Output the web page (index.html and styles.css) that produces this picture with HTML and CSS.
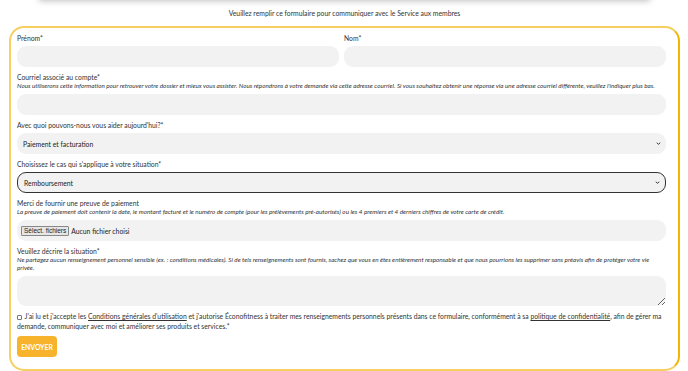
FILE: index.html
```html
<!DOCTYPE html>
<html>
<head>
    <link rel="stylesheet" href="styles.css">
    <title>Service aux membres</title>
</head>
<body>
    <div class="topShadow"></div>
    <p class="intro">Veuillez remplir ce formulaire pour communiquer avec le Service aux membres</p>
    <form class="card">
        <div class="row">
            <div class="field">
                <label>Prénom*</label>
                <input type="text" class="box">
            </div>
            <div class="field">
                <label>Nom*</label>
                <input type="text" class="box">
            </div>
        </div>
        <div class="field">
            <label>Courriel associé au compte*</label>
            <p class="hint">Nous utiliserons cette information pour retrouver votre dossier et mieux vous assister. Nous répondrons à votre demande via cette adresse courriel. Si vous souhaitez obtenir une réponse via une adresse courriel différente, veuillez l'indiquer plus bas.</p>
            <input type="email" class="box">
        </div>
        <div class="field">
            <label>Avec quoi pouvons-nous vous aider aujourd'hui?*</label>
            <div class="box select">
                <span>Paiement et facturation</span>
                <svg class="chev" viewBox="0 0 10 6"><path d="M1.5 1.5 L5 4.5 L8.5 1.5" fill="none" stroke="#222" stroke-width="1.8"/></svg>
            </div>
        </div>
        <div class="field">
            <label>Choisissez le cas qui s'applique à votre situation*</label>
            <div class="box select active">
                <span>Remboursement</span>
                <svg class="chev" viewBox="0 0 10 6"><path d="M1.5 1.5 L5 4.5 L8.5 1.5" fill="none" stroke="#222" stroke-width="1.8"/></svg>
            </div>
        </div>
        <div class="field">
            <label>Merci de fournir une preuve de paiement</label>
            <p class="hint">La preuve de paiement doit contenir la date, le montant facturé et le numéro de compte (pour les prélèvements pré-autorisés) ou les 4 premiers et 4 derniers chiffres de votre carte de crédit.</p>
            <div class="box file">
                <span class="fileBtn">Sélect. fichiers</span>
                <span>Aucun fichier choisi</span>
            </div>
        </div>
        <div class="field">
            <label>Veuillez décrire la situation*</label>
            <p class="hint">Ne partagez aucun renseignement personnel sensible (ex. : conditions médicales). Si de tels renseignements sont fournis, sachez que vous en êtes entièrement responsable et que nous pourrions les supprimer sans préavis afin de protéger votre vie privée.</p>
            <textarea class="box area"></textarea>
        </div>
        <p class="consent">
            <span class="check"></span>
            J'ai lu et j'accepte les <a href="#">Conditions générales d'utilisation</a> et j'autorise Éconofitness à traiter mes renseignements personnels présents dans ce formulaire, conformément à sa <a href="#">politique de confidentialité</a>, afin de gérer ma<br>demande, communiquer avec moi et améliorer ses produits et services.*
        </p>
        <button type="button" class="send">ENVOYER</button>
    </form>
</body>
</html>
```

FILE: styles.css
```css
*{
    margin: 0px;
    padding: 0px;
    box-sizing: border-box;
}
body{
    background-color: #fff;
    font-family: Lato, "Open Sans", sans-serif;
    font-size: 6.8px;
    color: #333;
    padding: 0px 8px 0px 9px;
}
.topShadow{
    height: 20px;
    margin: -20px 30px 0px 30px;
    box-shadow: 0px 1px 6px rgba(0, 0, 0, 0.25);
}
.intro{
    text-align: center;
    line-height: 9px;
    margin: 9px 0px 8px 0px;
}
.card{
    border: 2px solid #f6cf60;
    border-right-color: #f5b400;
    border-radius: 15px;
    padding: 6px 12px 12px 6px;
}
.row{
    display: flex;
    gap: 5px;
}
.row .field{
    flex: 1;
}
.field{
    margin-bottom: 6px;
}
.field label{
    display: block;
    line-height: 9px;
    margin-bottom: 3px;
}
.field label:has(+ .hint){
    margin-bottom: 0px;
}
.hint{
    font-style: italic;
    font-size: 6.3px;
    line-height: 8px;
    margin-bottom: 4px;
}
.box{
    display: block;
    width: 100%;
    height: 21px;
    border: none;
    border-radius: 9px;
    background-color: #f2f2f2;
    font-family: inherit;
    font-size: 6.8px;
    color: #222;
}
.select{
    display: flex;
    align-items: center;
    justify-content: space-between;
    padding: 0px 5px 0px 6px;
}
.select.active{
    border: 1.5px solid #333;
}
.chev{
    width: 5px;
    height: 3px;
}
.file{
    display: flex;
    align-items: center;
    gap: 2px;
    padding-left: 4px;
}
.fileBtn{
    font-family: "Liberation Sans", Arial, sans-serif;
    font-size: 6.5px;
    background-color: #e6e6e6;
    border: 1px solid #888;
    border-radius: 1px;
    padding: 0px 2px;
    line-height: 8px;
}
.area{
    height: 30px;
    resize: vertical;
}
.consent{
    line-height: 9.5px;
    margin-bottom: 5px;
}
.consent a{
    color: #333;
}
.check{
    display: inline-block;
    width: 5px;
    height: 5px;
    border: 1px solid #777;
    border-radius: 1px;
    vertical-align: -0.5px;
    margin-right: 1px;
}
.send{
    width: 40px;
    height: 21px;
    border: none;
    border-radius: 4px;
    background-color: #f7b32b;
    color: #fff;
    font-family: inherit;
    font-weight: bold;
    font-size: 6.8px;
}
```
